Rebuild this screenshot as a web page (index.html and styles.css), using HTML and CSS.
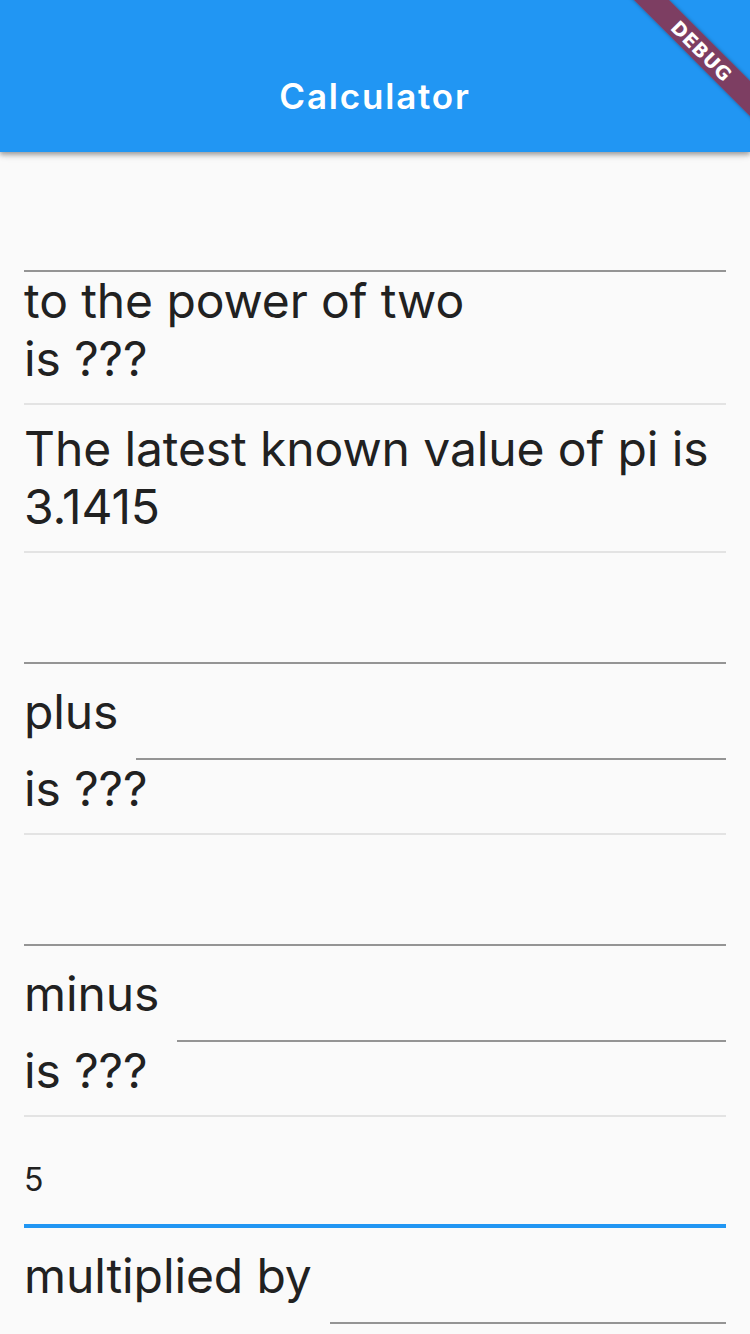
FILE: index.html
```html
<!DOCTYPE html>
<html lang="en">
<head>
<meta charset="utf-8">
<title>Calculator</title>
<link rel="stylesheet" href="styles.css">
</head>
<body>
<header class="appbar">
  <div class="statusbar"></div>
  <div class="toolbar"><h1 class="title">Calculator</h1></div>
</header>
<div class="banner-clip"><div class="banner"><span>DEBUG</span></div></div>
<main class="list">
  <div class="field"></div>
  <p class="txt">to the power of two</p>
  <p class="txt">is ???</p>
  <div class="divider"></div>

  <p class="txt">The latest known value of pi is 3.1415</p>
  <div class="divider"></div>

  <div class="field"></div>
  <div class="row"><span class="txt">plus</span><div class="field grow"></div></div>
  <p class="txt">is ???</p>
  <div class="divider"></div>

  <div class="field"></div>
  <div class="row"><span class="txt">minus</span><div class="field grow"></div></div>
  <p class="txt">is ???</p>
  <div class="divider"></div>

  <div class="field focused"><span class="value">5</span></div>
  <div class="row"><span class="txt">multiplied by</span><div class="field grow"></div></div>
</main>
</body>
</html>
```
FILE: styles.css
```css
* { box-sizing: border-box; }
html, body {
  margin: 0;
  padding: 0;
  width: 750px;
  height: 1334px;
  overflow: hidden;
  background: #fafafa;
  font-family: Inter, "Noto Sans", sans-serif;
  color: #212121;
}
.appbar {
  position: relative;
  z-index: 2;
  background: #2196f3;
  height: 152px;
  box-shadow: 0 2px 4px rgba(0,0,0,0.2), 0 4px 5px rgba(0,0,0,0.14), 0 1px 10px rgba(0,0,0,0.12);
}
.statusbar { height: 40px; }
.toolbar {
  height: 112px;
  display: flex;
  align-items: center;
  justify-content: center;
}
.title {
  margin: 0;
  color: #fff;
  font-size: 35px;
  font-weight: 600;
  line-height: 40px;
  letter-spacing: 1.8px;
}
.banner-clip {
  position: absolute;
  z-index: 5;
  top: 0;
  right: 0;
  width: 160px;
  height: 160px;
  overflow: hidden;
}
.banner {
  position: absolute;
  left: -8px;
  top: 38px;
  width: 240px;
  height: 25px;
  transform: rotate(45deg);
  background: rgba(170, 20, 30, 0.68);
  box-shadow: 0 0 4px rgba(0,0,0,0.35);
  display: flex;
  align-items: center;
  justify-content: center;
}
.banner span {
  color: #fff;
  font-family: "DejaVu Sans", sans-serif;
  font-weight: 900;
  font-size: 19px;
  line-height: 24px;
  letter-spacing: 0.5px;
}
.list {
  padding: 24px 24px;
  display: flex;
  flex-direction: column;
}
.txt {
  margin: 0;
  font-size: 48px;
  line-height: 58px;
  font-weight: 400;
  letter-spacing: -0.1px;
}
.field {
  height: 96px;
  border-bottom: 2px solid #949494;
  flex-shrink: 0;
}
.field.focused {
  border-bottom: 4px solid #2196f3;
  padding-top: 28px;
}
.value {
  font-size: 32px;
  line-height: 40px;
  display: block;
}
.row {
  display: flex;
  align-items: center;
  gap: 18px;
  height: 96px;
}
.row .grow {
  flex: 1;
  align-self: stretch;
}
.divider {
  height: 32px;
  display: flex;
  align-items: center;
  flex-shrink: 0;
}
.divider::before {
  content: "";
  display: block;
  width: 100%;
  height: 2px;
  background: #e3e3e3;
}
```
